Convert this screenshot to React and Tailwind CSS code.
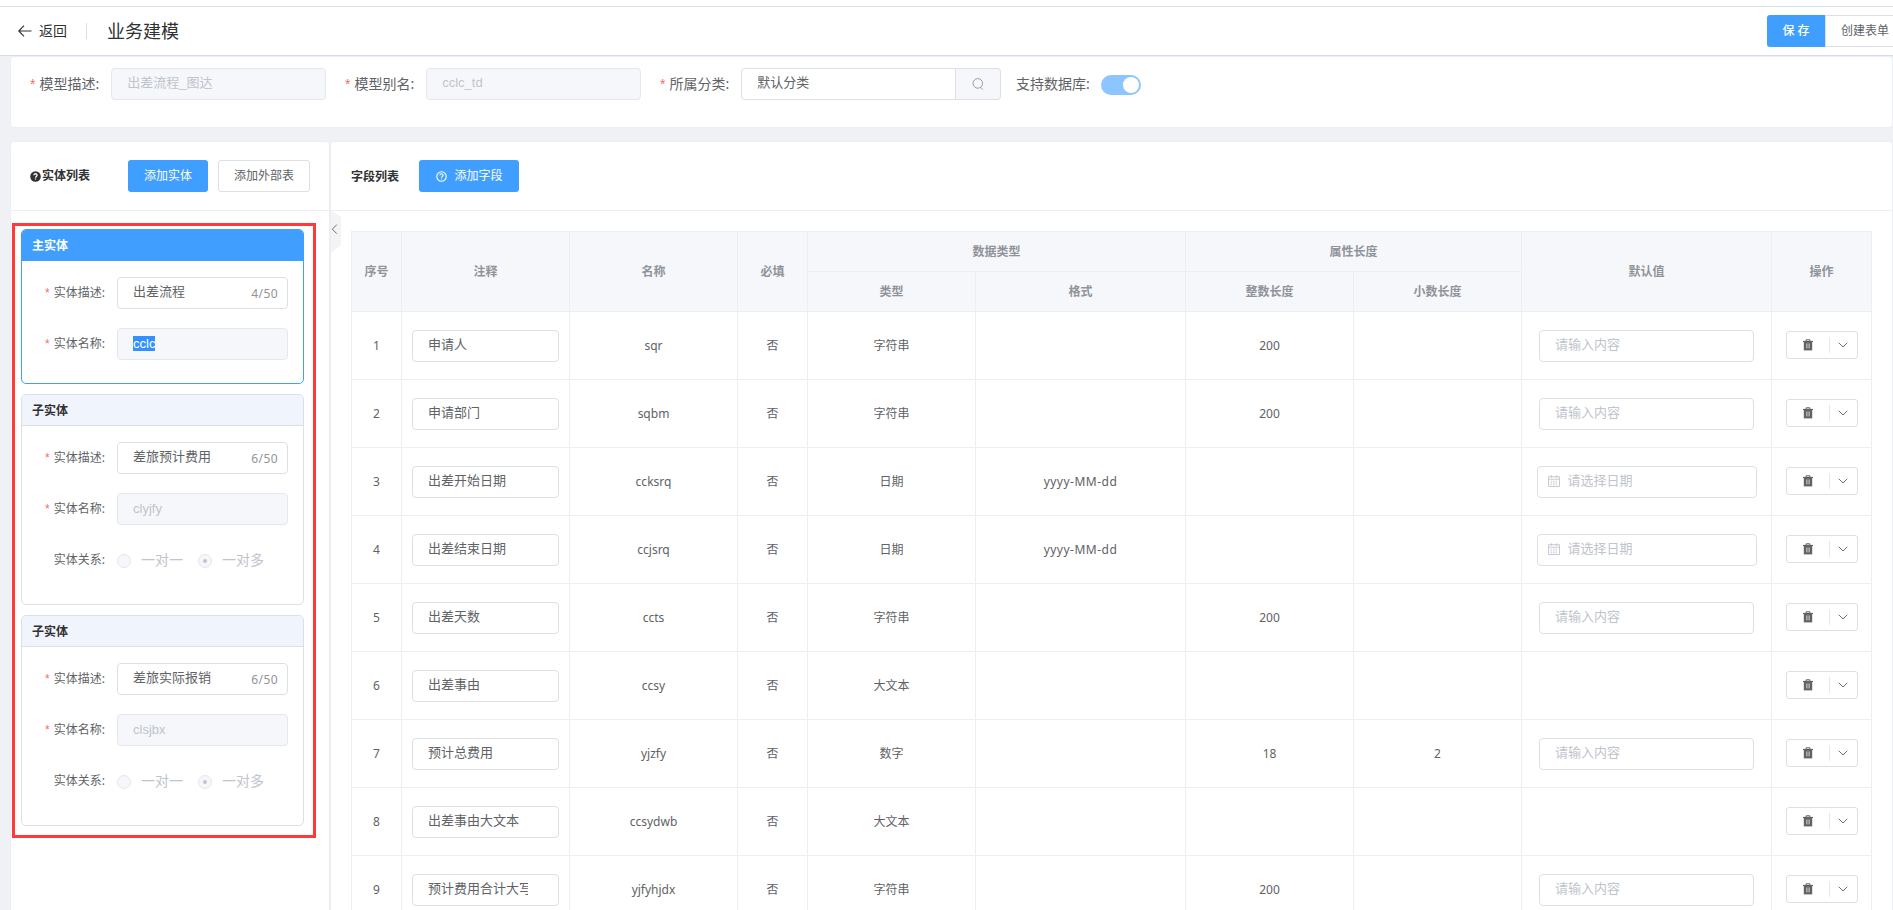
import clsx from "clsx";

const entities = [
  { title: "主实体", desc: "出差流程", name: "cclc", main: true },
  { title: "子实体", desc: "差旅预计费用", name: "clyjfy" },
  { title: "子实体", desc: "差旅实际报销", name: "clsjbx" },
];

const fields = [
  { label: "申请人", name: "sqr", type: "字符串", len: "200", input: "text" },
  { label: "申请部门", name: "sqbm", type: "字符串", len: "200", input: "text" },
  { label: "出差开始日期", name: "ccksrq", type: "日期", format: "yyyy-MM-dd", input: "date" },
  { label: "出差结束日期", name: "ccjsrq", type: "日期", format: "yyyy-MM-dd", input: "date" },
  { label: "出差天数", name: "ccts", type: "字符串", len: "200", input: "text" },
  { label: "出差事由", name: "ccsy", type: "大文本" },
  { label: "预计总费用", name: "yjzfy", type: "数字", len: "18", decimal: "2", input: "text" },
  { label: "出差事由大文本", name: "ccsydwb", type: "大文本" },
  { label: "预计费用合计大写", name: "yjfyhjdx", type: "字符串", len: "200", input: "text" },
];

const inputFont = "font-['Liberation_Sans','Noto_Sans_CJK_SC',sans-serif] text-[13px]";

function BackIcon() {
  return (
    <svg width="14" height="12" viewBox="0 0 14 12" fill="none" stroke="#303133" strokeWidth="1.1">
      <path d="M13.5 6H1M6 0.7L0.8 6L6 11.3" />
    </svg>
  );
}

function TrashIcon() {
  return (
    <svg width="10" height="12" viewBox="0 0 10 12" fill="none">
      <path d="M3.1 2V0.8H6.9V2" stroke="#606266" strokeWidth="1" />
      <path d="M0 1.9H10V3H0Z" fill="#606266" />
      <path d="M0.8 3H9.2V11.4H0.8Z" fill="#606266" />
      <path d="M3.9 4.4V9.4M6.1 4.4V9.4" stroke="#dfe8e0" strokeWidth="0.9" />
    </svg>
  );
}

function ChevronIcon() {
  return (
    <svg width="10" height="6" viewBox="0 0 10 6" fill="none" stroke="#606266" strokeWidth="0.9">
      <path d="M0.7 0.7L5 5L9.3 0.7" />
    </svg>
  );
}

function CalendarIcon() {
  return (
    <svg width="12" height="12" viewBox="0 0 12 12" fill="none" stroke="#c0c4cc" strokeWidth="0.9">
      <path d="M0.5 1.7H11.5V11.5H0.5ZM0.5 4.2H11.5M3.3 0.2V2.8M8.7 0.2V2.8" />
      <path d="M2.5 6.2H9.5M2.5 8H9.5M2.5 9.7H9.5" strokeDasharray="1.4 1.1" />
    </svg>
  );
}

function SearchIcon() {
  return (
    <svg width="12" height="12" viewBox="0 0 12 12" fill="none" stroke="#909399" strokeWidth="0.9">
      <circle cx="5.8" cy="5.4" r="4.8" />
      <path d="M8.4 9.2L10.8 11.6" />
    </svg>
  );
}

function HelpIcon({ solid }) {
  return (
    <svg width="11" height="11" viewBox="0 0 11 11" fill="none">
      <circle
        cx="5.5"
        cy="5.5"
        r={solid ? 5.3 : 4.7}
        fill={solid ? "#303133" : "none"}
        stroke={solid ? "none" : "#fff"}
        strokeWidth="1.1"
      />
      <path
        d="M3.9 4.3C3.9 2.2 7.2 2.3 7.1 4.3C7.1 5.4 5.5 5.5 5.5 6.8M5.5 7.5V8.6"
        stroke="#fff"
        strokeWidth={solid ? 1.3 : 1.1}
      />
    </svg>
  );
}

function Star() {
  return <span className="mr-1 font-['Liberation_Sans',sans-serif] text-[#f56c6c]">*</span>;
}

function Box({ className, disabled, children }) {
  return (
    <div
      className={clsx(
        "flex h-8 shrink-0 items-center rounded border pb-0.5",
        inputFont,
        disabled ? "border-[#e4e7ed] bg-[#f5f7fa] text-[#c0c4cc]" : "border-[#dcdfe6] bg-white text-[#606266]",
        className
      )}
    >
      {children}
    </div>
  );
}

function Header() {
  return (
    <header className="flex h-[50px] items-center border-t border-b border-t-[#dcdfe6] border-b-[#d8dce5] bg-white pl-[18px] text-[#303133]">
      <BackIcon />
      <span className="ml-[7px] text-sm">返回</span>
      <span className="mr-5 ml-[19px] h-4 w-px bg-[#dcdfe6]" />
      <h1 className="text-lg">业务建模</h1>
      <div className="ml-auto flex w-[126px] text-xs">
        <button className="h-8 w-[58px] shrink-0 rounded-l-[3px] bg-[#409eff] font-medium text-white">保 存</button>
        <button className="h-8 w-20 shrink-0 border border-[#dcdfe6] bg-white text-[#606266]">创建表单</button>
      </div>
    </header>
  );
}

function ModelLabel({ required, children }) {
  return (
    <label className="mr-3 flex items-center text-sm text-[#606266]">
      {required && <Star />}
      {children}
    </label>
  );
}

function ModelForm() {
  return (
    <section className="flex h-[72px] items-start rounded border border-[#ebeef5] bg-white pt-[11px] pl-[19px]">
      <div className="flex w-[315px] items-center">
        <ModelLabel required>模型描述:</ModelLabel>
        <Box disabled className="w-[215px] pl-[15px]">出差流程_图达</Box>
      </div>
      <div className="flex w-[315px] items-center">
        <ModelLabel required>模型别名:</ModelLabel>
        <Box disabled className="w-[215px] pl-[15px]">cclc_td</Box>
      </div>
      <div className="flex w-[356px] items-center">
        <ModelLabel required>所属分类:</ModelLabel>
        <Box className="w-[215px] rounded-r-none pl-[15px]">默认分类</Box>
        <div className="flex h-8 w-[45px] shrink-0 items-center justify-center rounded-r border border-l-0 border-[#dcdfe6] bg-[#f5f7fa]">
          <SearchIcon />
        </div>
      </div>
      <div className="flex h-8 items-center">
        <ModelLabel>支持数据库:</ModelLabel>
        <div className="mt-0.5 -ml-px flex h-5 w-10 items-center justify-end rounded-full bg-[#8cc5ff] pr-0.5">
          <span className="size-4 rounded-full bg-white" />
        </div>
      </div>
    </section>
  );
}

function EntityRow({ label, required, children }) {
  return (
    <div className="mb-[19px] flex h-8 items-center">
      <label className="mr-3 flex w-[83px] items-center justify-end text-xs text-[#606266]">
        {required && <Star />}
        {label}
      </label>
      {children}
    </div>
  );
}

function Radio({ checked, children }) {
  return (
    <div className="mr-[15px] flex items-center text-sm text-[#c0c4cc]">
      <span className="mt-0.5 mr-2.5 flex size-3.5 items-center justify-center rounded-full border border-[#e4e7ed] bg-[#f5f7fa]">
        {checked && <span className="size-1 rounded-full bg-[#c0c4cc]" />}
      </span>
      {children}
    </div>
  );
}

function EntityCard({ entity }) {
  const { title, desc, name, main } = entity;
  return (
    <div
      className={clsx(
        "w-[283px] overflow-hidden rounded-[5px] border bg-white",
        main ? "h-[155px] border-[#409eff]" : "h-[211px] border-[#dcdfe6]"
      )}
    >
      <h3
        className={clsx(
          "flex h-[31px] items-center border-b pt-0.5 pl-2.5 text-xs font-bold",
          main ? "border-[#409eff] bg-[#409eff] text-white" : "border-[#dcdfe6] bg-[#f0f4fd] text-[#303133]"
        )}
      >
        {title}
      </h3>
      <div className="pt-4">
        <EntityRow label="实体描述:" required>
          <Box className="w-[171px] justify-between pr-[9px] pl-[15px]">
            {desc}
            <span className="mt-[3px] font-['Noto_Sans',sans-serif] text-xs tracking-[0.4px] text-[#909399]">
              {desc.length}/50
            </span>
          </Box>
        </EntityRow>
        <EntityRow label="实体名称:" required>
          <Box disabled className="w-[171px] pl-[15px]">
            <span className={clsx("leading-[15px]", main && "bg-[#3390ff] text-white")}>{name}</span>
          </Box>
        </EntityRow>
        {!main && (
          <EntityRow label="实体关系:">
            <Radio>一对一</Radio>
            <Radio checked>一对多</Radio>
          </EntityRow>
        )}
      </div>
    </div>
  );
}

function EntityPanel() {
  return (
    <aside className="w-[319px] shrink-0 rounded-t border border-r-0 border-[#ebeef5] bg-white">
      <div className="flex h-[69px] items-center border-b border-[#ebeef5] pl-[19px] text-xs">
        <HelpIcon solid />
        <span className="ml-px font-bold text-[#303133]">实体列表</span>
        <button className="ml-[38px] h-8 w-20 rounded-[3px] bg-[#409eff] text-white">添加实体</button>
        <button className="ml-2.5 h-8 w-[92px] rounded-[3px] border border-[#dcdfe6] text-[#606266]">添加外部表</button>
      </div>
      <div className="relative flex flex-col gap-2.5 pt-[18px] pl-2.5">
        {entities.map((entity) => (
          <EntityCard key={entity.name} entity={entity} />
        ))}
        {/* Highlight frame around the entity cards */}
        <div className="pointer-events-none absolute top-3 left-px h-[615px] w-[304px] border-3 border-[#ff3838]" />
      </div>
    </aside>
  );
}

function DefaultValue({ kind }) {
  if (kind === "date") {
    return (
      <Box className="mx-auto w-[220px] pl-2.5">
        <CalendarIcon />
        <span className="ml-2 text-[#c0c4cc]">请选择日期</span>
      </Box>
    );
  }
  if (kind === "text") {
    return (
      <Box className="ml-[17px] w-[215px] pl-[15px]">
        <span className="text-[#c0c4cc]">请输入内容</span>
      </Box>
    );
  }
  return null;
}

const th = "border-r border-b border-[#ebeef5] bg-[#f5f7fa] font-bold";
const td = "h-[68px] border-r border-b border-[#ebeef5] p-0 text-center";

function FieldTable() {
  return (
    <table className="w-[1521px] table-fixed border-separate border-spacing-0 border-t border-l border-[#ebeef5] text-xs text-[#606266]">
      <colgroup>
        <col className="w-[50px]" />
        <col className="w-[168px]" />
        <col className="w-[168px]" />
        <col className="w-[70px]" />
        <col className="w-[168px]" />
        <col className="w-[210px]" />
        <col className="w-[168px]" />
        <col className="w-[168px]" />
        <col className="w-[250px]" />
        <col className="w-[100px]" />
      </colgroup>
      <thead className="text-[#909399]">
        <tr className="h-10">
          <th className={th} rowSpan={2}>序号</th>
          <th className={th} rowSpan={2}>注释</th>
          <th className={th} rowSpan={2}>名称</th>
          <th className={th} rowSpan={2}>必填</th>
          <th className={th} colSpan={2}>数据类型</th>
          <th className={th} colSpan={2}>属性长度</th>
          <th className={th} rowSpan={2}>默认值</th>
          <th className={th} rowSpan={2}>操作</th>
        </tr>
        <tr className="h-10">
          <th className={th}>类型</th>
          <th className={th}>格式</th>
          <th className={th}>整数长度</th>
          <th className={th}>小数长度</th>
        </tr>
      </thead>
      <tbody>
        {fields.map((field, i) => (
          <tr key={field.name}>
            <td className={td}>{i + 1}</td>
            <td className={td}>
              <Box className="mx-auto w-[147px] pr-[30px] pl-[15px]">
                <span className="overflow-hidden whitespace-nowrap">{field.label}</span>
              </Box>
            </td>
            <td className={td}>{field.name}</td>
            <td className={td}>否</td>
            <td className={td}>{field.type}</td>
            <td className={clsx(td, "tracking-[0.5px]")}>{field.format}</td>
            <td className={td}>{field.len}</td>
            <td className={td}>{field.decimal}</td>
            <td className={td}>
              <DefaultValue kind={field.input} />
            </td>
            <td className={td}>
              <div className="mb-0.5 ml-3.5 flex h-7 w-[72px] items-center rounded-[3px] border border-[#dcdfe6]">
                <span className="flex w-[42px] justify-center">
                  <TrashIcon />
                </span>
                <span className="h-4 w-px bg-[#e4e7ed]" />
                <span className="flex w-[25px] justify-center">
                  <ChevronIcon />
                </span>
              </div>
            </td>
          </tr>
        ))}
      </tbody>
    </table>
  );
}

function FieldPanel() {
  return (
    <main className="relative min-w-0 grow rounded-t border border-l-2 border-[#ebeef5] bg-white">
      <div className="flex h-[69px] items-center border-b border-[#ebeef5] pl-5 text-xs">
        <span className="pt-0.5 font-bold text-[#303133]">字段列表</span>
        <button className="ml-5 flex h-8 w-[100px] items-center justify-center gap-2 rounded-[3px] bg-[#409eff] text-white">
          <HelpIcon />
          添加字段
        </button>
      </div>
      {/* Collapse handle on the panel edge */}
      <svg className="absolute top-[68px] left-0" width="10" height="43" viewBox="0 0 10 43" fill="none">
        <path d="M0 0L10 7V35L0 43Z" fill="#f4f4f4" />
        <path d="M5.8 14.7L1.3 19.2L5.8 23.7" stroke="#606266" strokeWidth="0.9" />
      </svg>
      <div className="pt-5 pl-5">
        <FieldTable />
      </div>
    </main>
  );
}

export default function App() {
  return (
    <div className="h-[910px] w-[1893px] overflow-hidden bg-[#f0f1f5] font-['Noto_Sans','Noto_Sans_CJK_SC',sans-serif]">
      <div className="h-1.5 bg-white" />
      <Header />
      <div className="pl-2.5">
        <ModelForm />
        <div className="mt-[13px] flex h-[800px]">
          <EntityPanel />
          <FieldPanel />
        </div>
      </div>
    </div>
  );
}
